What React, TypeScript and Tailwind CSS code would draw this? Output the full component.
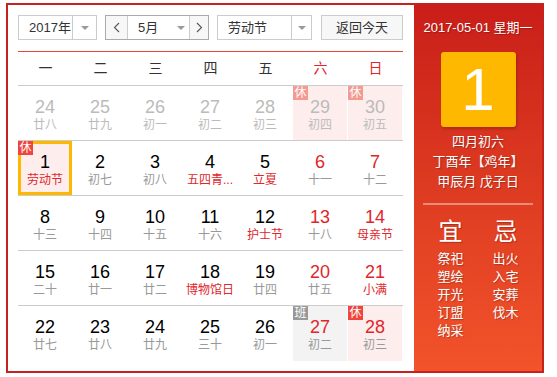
type Cell = {
  d: number;
  l: string;
  prev?: boolean;
  wk?: boolean;
  fest?: boolean;
  badge?: "休" | "班";
  sel?: boolean;
};

const rows: Cell[][] = [
  [
    { d: 24, l: "廿八", prev: true },
    { d: 25, l: "廿九", prev: true },
    { d: 26, l: "初一", prev: true },
    { d: 27, l: "初二", prev: true },
    { d: 28, l: "初三", prev: true },
    { d: 29, l: "初四", prev: true, badge: "休" },
    { d: 30, l: "初五", prev: true, badge: "休" },
  ],
  [
    { d: 1, l: "劳动节", fest: true, badge: "休", sel: true },
    { d: 2, l: "初七" },
    { d: 3, l: "初八" },
    { d: 4, l: "五四青...", fest: true },
    { d: 5, l: "立夏", fest: true },
    { d: 6, l: "十一", wk: true },
    { d: 7, l: "十二", wk: true },
  ],
  [
    { d: 8, l: "十三" },
    { d: 9, l: "十四" },
    { d: 10, l: "十五" },
    { d: 11, l: "十六" },
    { d: 12, l: "护士节", fest: true },
    { d: 13, l: "十八", wk: true },
    { d: 14, l: "母亲节", wk: true, fest: true },
  ],
  [
    { d: 15, l: "二十" },
    { d: 16, l: "廿一" },
    { d: 17, l: "廿二" },
    { d: 18, l: "博物馆日", fest: true },
    { d: 19, l: "廿四" },
    { d: 20, l: "廿五", wk: true },
    { d: 21, l: "小满", wk: true, fest: true },
  ],
  [
    { d: 22, l: "廿七" },
    { d: 23, l: "廿八" },
    { d: 24, l: "廿九" },
    { d: 25, l: "三十" },
    { d: 26, l: "初一" },
    { d: 27, l: "初二", wk: true, badge: "班" },
    { d: 28, l: "初三", wk: true, badge: "休" },
  ],
];

const Caret = () => (
  <span className="block w-0 h-0 border-l-[4px] border-r-[4px] border-t-[4px] border-l-transparent border-r-transparent border-t-[#999]" />
);

const Chevron = ({ dir }: { dir: "l" | "r" }) => (
  <svg width="7" height="11" viewBox="0 0 7 11">
    <polyline
      points={dir === "l" ? "6,1 1.5,5.5 6,10" : "1,1 5.5,5.5 1,10"}
      fill="none"
      stroke="#555"
      strokeWidth="1.1"
    />
  </svg>
);

function DayCell({ c }: { c: Cell }) {
  let bg = "";
  if (c.badge === "休") bg = "bg-[#fdeeed]";
  if (c.badge === "班") bg = "bg-[#f3f3f3]";
  const numColor = c.prev ? "text-[#bbb]" : c.wk ? "text-[#e0262b]" : "text-black";
  const lunColor = c.prev ? "text-[#bbb]" : c.fest ? "text-[#e0262b]" : "text-[#999]";
  const badgeColor =
    c.badge === "班" ? "bg-[#999]" : c.prev ? "bg-[#f39a93]" : "bg-[#f0453c]";
  return (
    <div className="relative h-full">
      <div
        className={`relative h-full mr-[1px] flex flex-col items-center pt-[11px] ${bg} ${
          c.sel ? "shadow-[inset_0_0_0_3px_#ffb800]" : ""
        }`}
      >
        {c.badge && (
          <span
            className={`absolute left-0 top-0 w-[15px] h-[14px] text-[12px] leading-[14px] text-white text-center ${badgeColor}`}
          >
            {c.badge}
          </span>
        )}
        <span className={`text-[18px] leading-[20px] ${numColor}`}>{c.d}</span>
        <span className={`text-[12px] leading-[16px] whitespace-nowrap ${lunColor}`}>{c.l}</span>
      </div>
    </div>
  );
}

export default function App() {
  const week = ["一", "二", "三", "四", "五", "六", "日"];
  return (
    <div
      className="bg-white w-[557px] h-[377px] pt-[3px] pl-[6px]"
      style={{ fontFamily: '"Liberation Sans", "Noto Sans CJK SC", sans-serif' }}
    >
      <div className="w-[538px] h-[370px] border-2 border-[#c8201c] flex">
        {/* left calendar */}
        <div className="w-[406px] pl-[10px] pr-[11px] pt-[10px] bg-white">
          <div className="flex h-[25px] text-[13px] text-[#333]">
            <div className="w-[79px] border border-[#ccc] flex">
              <div className="flex-1 flex items-center pl-[10px]">2017年</div>
              <div className="w-[24px] border-l border-[#ccc] flex items-center justify-center">
                <Caret />
              </div>
            </div>
            <div className="ml-[8px] w-[104px] border border-[#aaa] flex">
              <div className="w-[22px] bg-[#f7f7f7] flex items-center justify-center border-r border-[#ccc]">
                <Chevron dir="l" />
              </div>
              <div className="w-[61px] flex items-center pl-[10px] gap-[19px]">
                5月
                <Caret />
              </div>
              <div className="flex-1 bg-[#f7f7f7] flex items-center justify-center border-l border-[#ccc]">
                <Chevron dir="r" />
              </div>
            </div>
            <div className="ml-[8px] w-[95px] border border-[#ccc] flex">
              <div className="flex-1 flex items-center pl-[10px]">劳动节</div>
              <div className="w-[20px] border-l border-[#ccc] flex items-center justify-center">
                <Caret />
              </div>
            </div>
            <div className="ml-[9px] w-[82px] border border-[#ccc] bg-[#f7f7f7] flex items-center justify-center">
              返回今天
            </div>
          </div>
          <div className="mt-[11px] border-t border-[#e4463c]" />
          <div className="grid grid-cols-7 h-[34px] border-b border-[#ccc] text-[14px]">
            {week.map((w, i) => (
              <div
                key={w}
                className={`flex items-center justify-center ${i > 4 ? "text-[#e0262b]" : "text-[#333]"}`}
              >
                {w}
              </div>
            ))}
          </div>
          {rows.map((r, ri) => (
            <div
              key={ri}
              className={`grid grid-cols-7 h-[55px] ${ri < 4 ? "border-b border-[#ccc]" : ""}`}
            >
              {r.map((c) => (
                <DayCell key={`${ri}-${c.d}`} c={c} />
              ))}
            </div>
          ))}
        </div>
        {/* right panel */}
        <div className="flex-1 bg-gradient-to-b from-[#c91d19] to-[#f2532a] flex flex-col items-center text-white pt-[14px] [text-shadow:1px_1px_1px_rgba(0,0,0,0.25)]">
          <div className="text-[13px] leading-[18px]">2017-05-01 星期一</div>
          <div className="mt-[15px] w-[75px] h-[75px] rounded-[3px] bg-[#ffb800] flex items-center justify-center text-[60px] leading-none [text-shadow:none] shadow-[1px_2px_3px_rgba(0,0,0,0.2)]">
            1
          </div>
          <div className="mt-[5px] text-[13px] leading-[20px] text-center">
            <div>四月初六</div>
            <div>丁酉年【鸡年】</div>
            <div>甲辰月 戊子日</div>
          </div>
          <div className="mt-[11px] w-[110px] h-[2px] bg-white/40" />
          <div className="mt-[13px] flex">
            <div className="w-[55px] flex flex-col items-center">
              <div className="text-[24px] leading-[28px]">宜</div>
              <div className="mt-[4px] text-[13px] leading-[18px] text-center">
                <div>祭祀</div>
                <div>塑绘</div>
                <div>开光</div>
                <div>订盟</div>
                <div>纳采</div>
              </div>
            </div>
            <div className="w-[55px] flex flex-col items-center">
              <div className="text-[24px] leading-[28px]">忌</div>
              <div className="mt-[4px] text-[13px] leading-[18px] text-center">
                <div>出火</div>
                <div>入宅</div>
                <div>安葬</div>
                <div>伐木</div>
              </div>
            </div>
          </div>
        </div>
      </div>
    </div>
  );
}
